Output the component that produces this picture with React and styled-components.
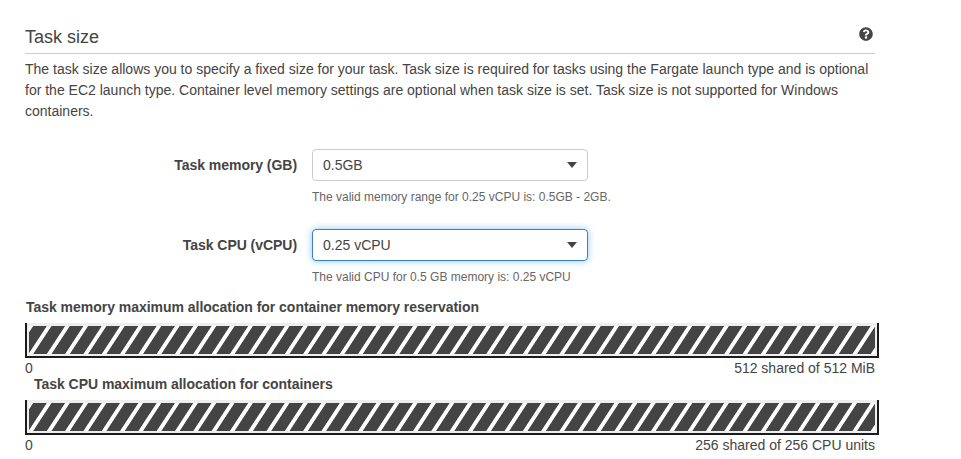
import React from "react";
import styled, { createGlobalStyle } from "styled-components";
import { FaQuestionCircle } from "react-icons/fa";

const GlobalStyle = createGlobalStyle`
  * { box-sizing: border-box; }
  body {
    margin: 0;
    background: #fff;
    color: #444;
    font: 14px/21px "Liberation Sans", Arial, sans-serif;
  }
`;

const Panel = styled.main`
  width: 879px;
  padding: 24px 0 0 25px;
`;

const Header = styled.header`
  display: flex;
  justify-content: space-between;
  width: 850px;
  height: 30px;
  padding-right: 2px;
  border-bottom: 1px solid #ccc;
`;

const Title = styled.h1`
  margin: 1px 0 0;
  font-size: 18px;
  line-height: 24px;
  font-weight: 400;
`;

const HelpIcon = styled(FaQuestionCircle)`
  width: 14px;
  height: 14px;
  margin-top: 3px;
`;

const Description = styled.p`
  width: 850px;
  margin: 5px 0 0;
`;

const Form = styled.form`
  display: flex;
  flex-direction: column;
  gap: 9px;
  margin-top: 27px;
`;

const Field = styled.div`
  display: grid;
  grid-template-columns: 272px 1fr;
  column-gap: 15px;
  height: 71px;
`;

const Label = styled.label`
  text-align: right;
  font-weight: 700;
  line-height: 32px;
  letter-spacing: -0.05px;
`;

const Select = styled.button`
  display: flex;
  align-items: center;
  justify-content: space-between;
  width: 276px;
  height: 32px;
  padding: 0 10px;
  border: 1px solid ${(p) => (p.$focused ? "#3b82c4" : "#ccc")};
  border-radius: 4px;
  background: #fff;
  box-shadow: ${(p) => (p.$focused ? "0 0 7px rgba(82, 168, 236, 0.65)" : "none")};
  color: #444;
  font: inherit;
`;

const Caret = styled.span`
  border: 5px solid transparent;
  border-top: 6px solid #444;
  border-bottom: 0;
`;

const Hint = styled.p`
  margin: 6px 0 0;
  color: #666;
  font-size: 12px;
  line-height: 20px;
`;

const Allocation = styled.section`
  height: 77px;
`;

const AllocationTitle = styled.h2`
  height: 14px;
  margin: 0;
  padding-left: ${(p) => p.$indent}px;
  font-size: 14px;
  line-height: 14px;
  letter-spacing: -0.03px;
`;

const Track = styled.div`
  height: 35px;
  margin-top: 9px;
  padding: 3px 2px 2px;
  border: solid #1b1b1f;
  border-width: 0 2px 2px;
  background: #eee;
`;

const Fill = styled.div`
  height: 28px;
  background: repeating-linear-gradient(
    123.2deg,
    #fff 0,
    #fff 3.1px,
    #444 3.9px,
    #444 14.5px,
    #fff 15.32px
  );
`;

const Scale = styled.div`
  display: flex;
  justify-content: space-between;
  width: 850px;
  margin-top: 1px;
  line-height: 19px;
`;

const fields = [
  { label: "Task memory (GB)", value: "0.5GB", hint: "The valid memory range for 0.25 vCPU is: 0.5GB - 2GB." },
  { label: "Task CPU (vCPU)", value: "0.25 vCPU", hint: "The valid CPU for 0.5 GB memory is: 0.25 vCPU", focused: true },
];

const allocations = [
  { title: "Task memory maximum allocation for container memory reservation", total: "512 shared of 512 MiB", indent: 1 },
  { title: "Task CPU maximum allocation for containers", total: "256 shared of 256 CPU units", indent: 9 },
];

export default function App() {
  return (
    <Panel>
      <GlobalStyle />
      <Header>
        <Title>Task size</Title>
        <HelpIcon />
      </Header>
      <Description>
        The task size allows you to specify a fixed size for your task. Task size is required for tasks using the
        Fargate launch type and is optional for the EC2 launch type. Container level memory settings are optional when
        task size is set. Task size is not supported for Windows containers.
      </Description>
      <Form>
        {fields.map((f) => (
          <Field key={f.label}>
            <Label>{f.label}</Label>
            <div>
              <Select type="button" $focused={f.focused}>
                {f.value}
                <Caret />
              </Select>
              <Hint>{f.hint}</Hint>
            </div>
          </Field>
        ))}
      </Form>
      {allocations.map((a) => (
        <Allocation key={a.title}>
          <AllocationTitle $indent={a.indent}>{a.title}</AllocationTitle>
          <Track>
            <Fill />
          </Track>
          <Scale>
            <span>0</span>
            <span>{a.total}</span>
          </Scale>
        </Allocation>
      ))}
    </Panel>
  );
}
